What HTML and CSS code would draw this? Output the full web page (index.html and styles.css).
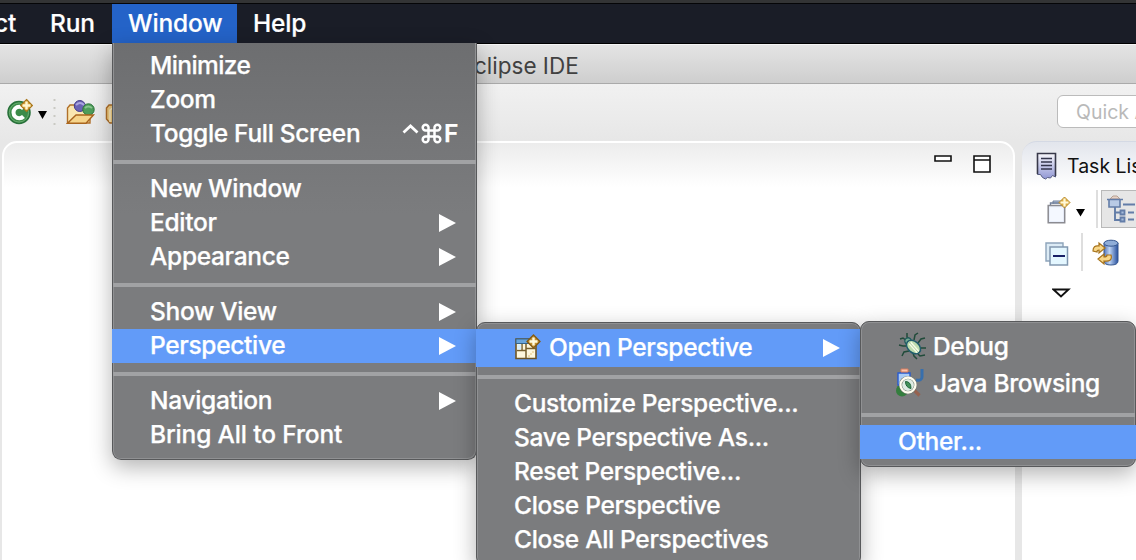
FILE: index.html
```html
<!DOCTYPE html>
<html lang="en">
<head>
<meta charset="utf-8">
<title>Eclipse IDE</title>
<link rel="stylesheet" href="styles.css">
</head>
<body>
<div class="screen">
  <nav class="menubar">
    <span class="bar-item bar-cut">ct</span>
    <span class="bar-item bar-run">Run</span>
    <span class="bar-item bar-active">Window</span>
    <span class="bar-item bar-help">Help</span>
  </nav>
  <header class="titlebar"><span>clipse IDE</span></header>
  <div class="toolbar">
    <svg class="tool-new" width="26" height="28" viewBox="0 0 26 28">
      <circle cx="12" cy="15.500" r="11" fill="#3c8b49" stroke="#28703a" stroke-width="1.500"/>
      <circle cx="12" cy="15.500" r="9.600" fill="none" stroke="#69ad70" stroke-width="1"/>
      <path d="M16.500 11.500A5.800 5.800 0 1 0 16.500 19.500" fill="none" stroke="#fff" stroke-width="4"/>
      <path d="M19.500 2.500L25.300 8.500L19.500 14.500L13.700 8.500Z" fill="#d9a63f" stroke="#a9771b" stroke-width="1.200"/>
      <path d="M19.500 4.500v8M15.500 8.500h8" stroke="#fff6cf" stroke-width="2.400"/>
    </svg>
    <svg class="tool-arrow" width="9" height="8" viewBox="0 0 9 8"><path d="M0 0h9L4.500 8z" fill="#000"/></svg>
    <svg class="tool-dots" width="3" height="27" viewBox="0 0 3 27"><path d="M1.500 0v27" stroke="#c9c9c3" stroke-width="2" stroke-dasharray="2 6"/></svg>
    <svg class="tool-open" width="30" height="28" viewBox="0 0 30 28">
      <path d="M1.500 24V9L4 6h6l2 3h12v15z" fill="#fae6b0" stroke="#b0702a" stroke-width="1.400"/>
      <circle cx="13.800" cy="7" r="5.500" fill="#6b63b5" stroke="#463d8c" stroke-width="1"/>
      <path d="M10 6q4-4 8 0" stroke="#aaa5df" stroke-width="2" fill="none"/>
      <circle cx="22.500" cy="10.500" r="5.700" fill="#4e9d5b" stroke="#2b7438" stroke-width="1"/>
      <path d="M19 9q3-3 7 0" stroke="#89c58e" stroke-width="2" fill="none"/>
      <path d="M1.500 24.300L10 16h17.500L20 24.300z" fill="#f6d48a" stroke="#a9651e" stroke-width="1.400"/>
    </svg>
    <svg class="tool-next" width="20" height="28" viewBox="0 0 20 28"><path d="M1.500 20V9L4 6h15v18H5z" fill="#f4cf83" stroke="#b0702a" stroke-width="1.500"/><path d="M5 23V11l5-4" fill="none" stroke="#fff0c5" stroke-width="1.500"/></svg>
    <div class="quick">Quick Access</div>
  </div>
  <main class="work">
    <section class="editor">
      <svg width="19" height="8" viewBox="0 0 19 8"><path d="M1 1h16v5H1z" fill="#fff" stroke="#111" stroke-width="1.600"/></svg>
      <svg width="19" height="20" viewBox="0 0 19 20"><path d="M1 1h16v16H1zM1 5h16" fill="#fff" stroke="#111" stroke-width="1.600"/></svg>
    </section>
    <aside class="tasks">
      <div class="task-head">
        <svg width="21" height="28" viewBox="0 0 21 28">
          <defs><linearGradient id="sheet" x2="0" y2="1"><stop offset="0" stop-color="#f7f7fb"/><stop offset="1" stop-color="#9096d4"/></linearGradient></defs>
          <path d="M1.500 1.500h18V25l-3-1.500-2 2.500-3-.500-2 1.500-3-1.500-2-3h-3z" fill="url(#sheet)" stroke="#555b80" stroke-width="1"/>
          <path d="M1.500 22V1.500h18V24" fill="none" stroke="#38394a" stroke-width="1.600"/>
          <path d="M5 6.500h11M5 10h11M5 13.500h11M5 17h11" stroke="#34364c" stroke-width="1.300"/>
        </svg>
        <span>Task List</span>
      </div>
      <div class="task-row">
        <svg width="24" height="28" viewBox="0 0 24 28">
          <path d="M6 7V4h10v3" fill="#b5c7de" stroke="#71809b"/>
          <path d="M3.500 8V6h13" fill="none" stroke="#71809b" stroke-width="1.400"/>
          <path d="M1.200 8.500h16.500v17.200H1.200z" fill="#e9effb" stroke="#8b8b91" stroke-width="1.500"/>
          <path d="M3 10.500h13v13.500H3z" fill="#f4f8ff"/>
          <path d="M17.500 0L23 5.500L17.500 11L12 5.500Z" fill="#dfae45" stroke="#b88a2b" stroke-width="1"/>
          <path d="M17.500 1.500v8M13.500 5.500h8" stroke="#fff8d8" stroke-width="2.200"/>
        </svg>
        <svg class="row-arrow" width="9" height="8" viewBox="0 0 9 8"><path d="M0 0h9L4.500 7.500z" fill="#000"/></svg>
        <i class="rule rule-a"></i>
        <div class="tree-button">
          <svg width="36" height="36" viewBox="0 0 36 36">
            <path d="M8 8l3-3h4l3 3z" fill="#e8d2c5" stroke="#b6a194"/>
            <path d="M5 8.500h16M7 9v7h11V9" fill="#b8cae5" stroke="#637da8" stroke-width="1.600"/>
            <path d="M13 16v13h6M13 21.500h6M21 13.500h12M26 21.500h6M26 28.500h6" fill="none" stroke="#637da8" stroke-width="1.900"/>
            <path d="M18.500 19.500h4v4h-4zM18.500 26.500h4v4h-4z" fill="#a4bbda" stroke="#637da8" stroke-width="1.800"/>
          </svg>
        </div>
      </div>
      <div class="task-row second">
        <svg width="24" height="24" viewBox="0 0 24 24">
          <path d="M1 1h17v18H1z" fill="#dcebf5" stroke="#8da4ba" stroke-width="1.400"/>
          <path d="M5 5h17.500v18H5z" fill="#e4f7ff" stroke="#8198b0" stroke-width="1.500"/>
          <path d="M8 14h12" stroke="#182066" stroke-width="2"/>
        </svg>
        <i class="rule rule-b"></i>
        <svg width="28" height="28" viewBox="0 0 28 28">
          <defs><linearGradient id="drum"><stop offset="0" stop-color="#5275ba"/><stop offset=".4" stop-color="#bdd3f3"/><stop offset="1" stop-color="#264f9d"/></linearGradient></defs>
          <path d="M12 4v18q0 4 7 4t7-4V4z" fill="url(#drum)" stroke="#36578f"/>
          <ellipse cx="19" cy="4.200" rx="7" ry="3" fill="#8fadd8" stroke="#36578f"/>
          <path d="M1 12q0-6 6-5V4l6 5-6 5v-3q-2 0-2 2z" fill="#f8d789" stroke="#a7731c" stroke-width="1.200"/>
          <path d="M19 16q2 7-7 6v3l-6-5 6-5v3q3 0 3-2z" fill="#f8d789" stroke="#a7731c" stroke-width="1.200"/>
        </svg>
      </div>
      <svg class="view-menu" width="19" height="11" viewBox="0 0 19 11"><path d="M1.500 1.500h15L9 8.500z" fill="#fff" stroke="#111" stroke-width="1.900"/></svg>
    </aside>
  </main>

  <div class="menu menu-window">
    <div class="item"><span class="narrow">Minimize</span></div>
    <div class="item"><span>Zoom</span></div>
    <div class="item"><span>Toggle Full Screen</span>
      <span class="keys"><svg width="17" height="10" viewBox="0 0 17 10"><path d="M1.500 8.500L8.500 2l7 6.500" fill="none" stroke="#fff" stroke-width="2.800"/></svg><svg width="21" height="21" viewBox="0 0 21 21"><path d="M7.500 7.500H4.600A2.900 2.900 0 1 1 7.500 4.600V16.400A2.900 2.900 0 1 1 4.600 13.500H16.400A2.900 2.900 0 1 1 13.500 16.400V4.600A2.900 2.900 0 1 1 16.400 7.500H7.500" fill="none" stroke="#fff" stroke-width="2.500"/></svg><b>F</b></span></div>
    <hr>
    <div class="item"><span>New Window</span></div>
    <div class="item"><span>Editor</span><i class="more"></i></div>
    <div class="item"><span>Appearance</span><i class="more"></i></div>
    <hr>
    <div class="item"><span>Show View</span><i class="more"></i></div>
    <div class="item on"><span>Perspective</span><i class="more"></i></div>
    <hr>
    <div class="item"><span>Navigation</span><i class="more"></i></div>
    <div class="item"><span class="wide">Bring All to Front</span></div>
  </div>

  <div class="menu menu-perspective">
    <div class="item tall on">
      <svg class="icon" width="27" height="27" viewBox="0 0 27 27">
        <path d="M2 5h20v19.500H2z" fill="#fff8dd" stroke="#6e5525" stroke-width="1.600"/>
        <path d="M2 5h17v4.500H2z" fill="#69a5dc" stroke="#35658d"/>
        <path d="M3 16.500h9M12 14.500h10M8 10v6M12 10v14" stroke="#77602f" stroke-width="1.500"/>
        <path d="M3.200 10.500h4v5h-4z" fill="#d9eefa"/>
        <path d="M14 22h2M16 20h2M18 18h2" stroke="#e4c47c"/>
        <path d="M19.500 1L26 7.500L19.500 14L13 7.500Z" fill="#c49332" stroke="#845b14" stroke-width="1.300"/>
        <path d="M19.500 3.500v8M15.500 7.500h8" stroke="#fffbe0" stroke-width="2.400"/>
      </svg>
      <span>Open Perspective</span><i class="more"></i></div>
    <hr>
    <div class="item"><span>Customize Perspective...</span></div>
    <div class="item"><span>Save Perspective As...</span></div>
    <div class="item"><span>Reset Perspective...</span></div>
    <div class="item"><span>Close Perspective</span></div>
    <div class="item"><span>Close All Perspectives</span></div>
  </div>

  <div class="menu menu-open">
    <div class="item tall">
      <svg class="icon" width="28" height="28" viewBox="0 0 28 28">
        <path d="M9 9L5 6 2 7M9 14H5L1 13M11 19l-5 1-2 4M12 7L9 5V1M16 8l1-5 3-2M20 11l3-4 4-1M23 16h5M20 22l2 2 5-1M15 21l1 3 3 3" fill="none" stroke="#214b3a" stroke-width="1.500"/>
        <circle cx="10" cy="9" r="3.200" fill="#73a992" stroke="#21595c" stroke-width="1.200"/>
        <ellipse cx="15.500" cy="15" rx="8" ry="5.600" transform="rotate(42 15.500 15)" fill="#bddcae" stroke="#205c6c" stroke-width="1.500"/>
        <path d="M12 11l8 9" stroke="#f5fce5" stroke-width="3.500"/>
        <path d="M11 10l9 10" stroke="#9dc294" stroke-width=".8"/>
      </svg><span>Debug</span></div>
    <div class="item tall java">
      <svg class="icon" width="28" height="30" viewBox="0 0 28 30">
        <circle cx="6" cy="22.500" r="6" fill="#347e3e"/>
        <path d="M2 5h12v12H2z" fill="#aaccf5" stroke="#285bd0" stroke-width="1.400"/>
        <path d="M5 1h7v3H5z" fill="#fbc3a9" stroke="#d57c60"/>
        <path d="M26 1v8q0 4-6 3" fill="none" stroke="#386fac" stroke-width="3"/>
        <path d="M18 22l5.500 5.500" stroke="#956350" stroke-width="3.200"/>
        <circle cx="12" cy="17" r="7.500" fill="#dcebe3" stroke="#6b746a" stroke-width="3.200"/>
        <circle cx="12" cy="17" r="7.500" fill="none" stroke="#fffdf0" stroke-width="2.300"/>
        <path d="M9.500 13.500q5.500 0 5.500 7-5.500-1-5.500-7z" fill="#43915a" stroke="#1d643a"/>
      </svg><span>Java Browsing</span></div>
    <hr>
    <div class="item on"><span>Other...</span></div>
  </div>
</div>
</body>
</html>
```
FILE: styles.css
```css
* { box-sizing: border-box; }
body { margin: 0; }
.screen { position: relative; width: 1136px; height: 560px; overflow: hidden; display: flex; flex-direction: column; background: #e7e7e7; font-family: Inter, "Liberation Sans", sans-serif; }
svg { display: block; flex: none; }

.menubar { flex: none; height: 44px; display: flex; background: #1a1d27; border-top: 3px solid #333435; border-bottom: 1px solid #000; box-shadow: inset 0 1px #050507; color: #fff; font-size: 24.5px; font-weight: 500; line-height: 41px; letter-spacing: -.15px; -webkit-text-stroke: .2px #fff; }
.bar-item { flex: none; white-space: nowrap; }
.bar-cut { width: 56px; margin-left: -6px; }
.bar-run { width: 62px; }
.bar-active { width: 125px; margin-top: 1px; padding-left: 16px; background: #2463c8; line-height: 39px; }
.bar-help { padding-left: 16px; }

.titlebar { flex: none; height: 40px; padding-left: 474px; border-top: 1px solid #f5f5f5; border-bottom: 1px solid #aaa; background: linear-gradient(#e4e4e4, #cecece); color: #414141; font-size: 22.5px; line-height: 41px; }
.toolbar { flex: none; height: 57px; display: flex; padding-left: 7px; background: linear-gradient(#f1f1f1, #e7e7e7); }
.tool-new { margin-top: 13px; }
.tool-arrow { margin: 27px 0 0 5px; }
.tool-dots { margin: 15px 0 0 6px; }
.tool-open { margin: 15px 0 0 10px; }
.tool-next { margin: 15px 0 0 9px; }
.quick { flex: none; width: 120px; height: 33px; margin: 11px 0 0 932px; padding-left: 18px; border: 1.5px solid #bbb; border-radius: 6px; background: #fff; color: #b9b9b9; font-size: 19.5px; line-height: 33px; white-space: nowrap; }

.work { flex: 1; display: flex; gap: 7px; padding-left: 2px; min-height: 0; }
.editor { flex: none; width: 1013px; height: 440px; padding: 12px 21px; display: flex; justify-content: flex-end; gap: 20px; border: 2px solid #fff; border-radius: 15px 15px 0 0; background: linear-gradient(#ececec, #fff 44px); }
.tasks { flex: none; width: 160px; height: 440px; border-top: 1px solid #d4d9e4; border-radius: 15px 0 0 0; background: linear-gradient(#e2e5ec, #fff 45px); }
.task-head { display: flex; gap: 10px; height: 48px; padding: 10px 0 0 14px; color: #111; font-size: 19.5px; line-height: 29px; white-space: nowrap; }
.task-row { display: flex; height: 43px; padding-left: 25px; }
.task-row > svg:first-child { margin-top: 7px; }
.row-arrow { margin: 19px 0 0 5px; }
.rule { flex: none; width: 2px; height: 38px; background: #dedede; }
.rule-a { margin-left: 11px; }
.tree-button { flex: none; width: 60px; height: 38px; margin-left: 3px; border: 1.5px solid #b9b9b9; background: #e6e6e6; }
.task-row.second { padding-left: 23px; }
.task-row.second > svg:first-child { margin-top: 9px; }
.rule-b { margin: 0 9px 0 12px; }
.second > svg:last-child { margin-top: 6px; }
.view-menu { margin: 12px 0 0 30px; }

.menu { position: absolute; border: 1px solid #58595b; border-radius: 9px; background: #7b7c7e; color: #fff; font-size: 24.5px; font-weight: 500; letter-spacing: -.32px; -webkit-text-stroke: .25px #fff; box-shadow: 0 7px 22px rgba(0,0,0,.3), inset 0 0 0 1px #909193; }
.menu-window { left: 112px; top: 43px; width: 365px; height: 417px; padding-top: 6px; border-top: 0; border-radius: 0 0 9px 9px; background: linear-gradient(#6d6e70, #7b7c7e 170px); box-shadow: 0 7px 22px rgba(0,0,0,.3), inset 1px 0 #909193, inset -1px -1px #909193; }
.menu-perspective { left: 476px; top: 322px; width: 385px; height: 244px; padding-top: 6px; }
.menu-open { left: 860px; top: 321px; width: 276px; height: 146px; padding-top: 6px; }
.item { display: flex; align-items: center; height: 34px; padding: 0 20px 1px 37px; line-height: 33px; white-space: nowrap; }
.item.on { background: #629bf8; margin: 0 -1px; padding-left: 38px; padding-right: 21px; }
.item.tall { height: 38px; }
.menu-open .tall { height: 37px; }
.icon { margin-right: 8px; }
.menu-open .icon { margin-right: 7px; }
.menu-open .java .icon { margin-left: -2px; margin-right: 9px; }
.menu hr { height: 4px; margin: 9px 0 8px; border: 0; background: #a1a2a4; }
.menu-perspective hr { margin: 8px 0; }
.menu-open hr { margin: 11px 0 8px; }
.menu-open .on { padding-bottom: 2px; }
.more { margin-left: auto; border-left: 17px solid #fff; border-top: 9px solid transparent; border-bottom: 9px solid transparent; }
.narrow { letter-spacing: -.6px; }
.wide { letter-spacing: -.15px; }
.keys { display: flex; align-items: center; gap: 2px; margin-left: auto; margin-right: -2px; }
.keys b { font-weight: 600; }
.keys svg:first-child { margin-bottom: 9px; }
```
